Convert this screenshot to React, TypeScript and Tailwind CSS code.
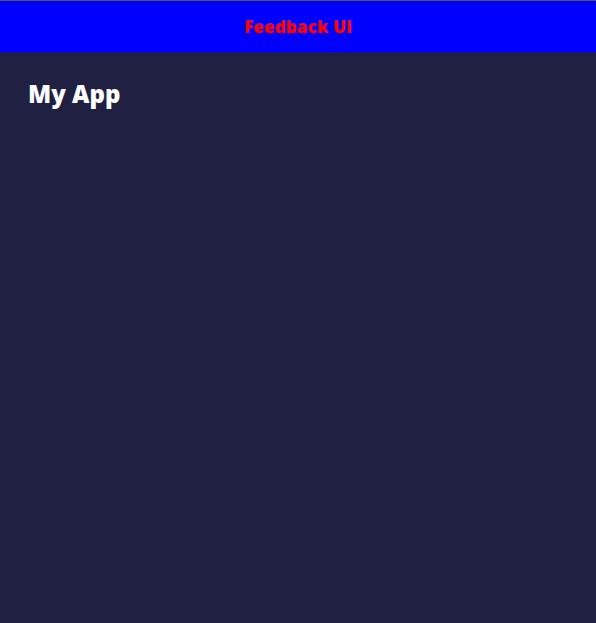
export default function App() {
  return (
    <div className="min-h-[623px] bg-[#202142] font-['Open_Sans',sans-serif]">
      <header className="flex h-[52px] items-center justify-center border-t border-[#555566] bg-[#0000ff]">
        <h2 className="text-[17px] font-extrabold tracking-[0.01em] text-[#ff0000]">Feedback UI</h2>
      </header>
      <main className="px-7 pt-[24px]">
        <h1 className="text-[24px] font-extrabold leading-9 text-white">My App</h1>
      </main>
    </div>
  );
}
